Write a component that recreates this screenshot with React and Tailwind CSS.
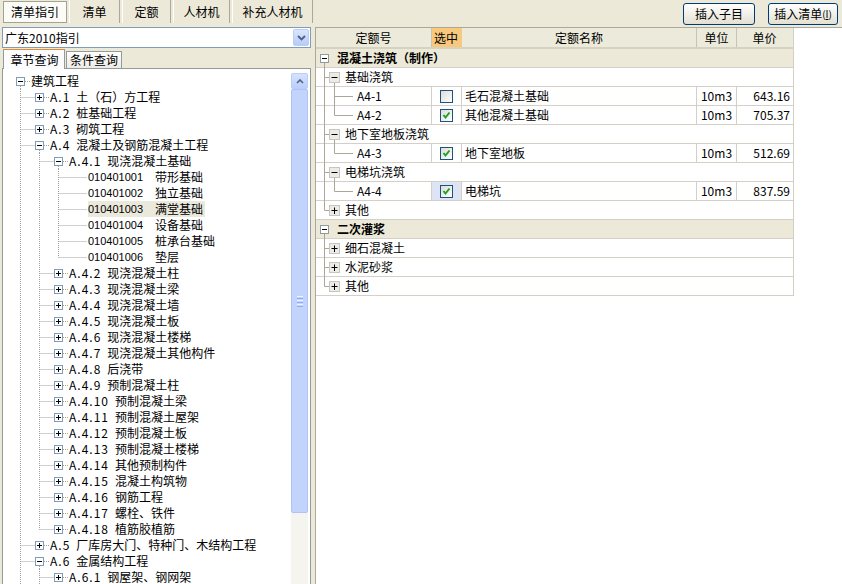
import React from 'react';

const tree = [
  [0, 'm', '', '建筑工程'],
  [1, 'p', 'A.1', '土（石）方工程'],
  [1, 'p', 'A.2', '桩基础工程'],
  [1, 'p', 'A.3', '砌筑工程'],
  [1, 'm', 'A.4', '混凝土及钢筋混凝土工程'],
  [2, 'm', 'A.4.1', '现浇混凝土基础'],
  [3, 'l', '010401001', '带形基础'],
  [3, 'l', '010401002', '独立基础'],
  [3, 'l', '010401003', '满堂基础', true],
  [3, 'l', '010401004', '设备基础'],
  [3, 'l', '010401005', '桩承台基础'],
  [3, 'l', '010401006', '垫层'],
  [2, 'p', 'A.4.2', '现浇混凝土柱'],
  [2, 'p', 'A.4.3', '现浇混凝土梁'],
  [2, 'p', 'A.4.4', '现浇混凝土墙'],
  [2, 'p', 'A.4.5', '现浇混凝土板'],
  [2, 'p', 'A.4.6', '现浇混凝土楼梯'],
  [2, 'p', 'A.4.7', '现浇混凝土其他构件'],
  [2, 'p', 'A.4.8', '后浇带'],
  [2, 'p', 'A.4.9', '预制混凝土柱'],
  [2, 'p', 'A.4.10', '预制混凝土梁'],
  [2, 'p', 'A.4.11', '预制混凝土屋架'],
  [2, 'p', 'A.4.12', '预制混凝土板'],
  [2, 'p', 'A.4.13', '预制混凝土楼梯'],
  [2, 'p', 'A.4.14', '其他预制构件'],
  [2, 'p', 'A.4.15', '混凝土构筑物'],
  [2, 'p', 'A.4.16', '钢筋工程'],
  [2, 'p', 'A.4.17', '螺栓、铁件'],
  [2, 'p', 'A.4.18', '植筋胶植筋'],
  [1, 'p', 'A.5', '厂库房大门、特种门、木结构工程'],
  [1, 'm', 'A.6', '金属结构工程'],
  [2, 'p', 'A.6.1', '钢屋架、钢网架'],
];

// does a vertical guide at depth a continue below row i?
// the list goes on past the visible part, so the two outer guides keep running
const cont = (i, a) => {
  for (let j = i + 1; j < tree.length; j++) {
    const l = tree[j][0];
    if (l <= a) return false;
    if (l === a + 1) return true;
  }
  return a <= 1;
};

const dot = { stroke: '#a0a0a0', strokeDasharray: '1 1' };

function TreeRow({ i }) {
  const [lv, kind, code, name, hl] = tree[i];
  const bx = 13 + 19 * lv;
  const c = (a) => 13 + 19 * a + 4.5;
  const open = tree[i + 1] && tree[i + 1][0] === lv + 1;
  const lines = [];
  for (let a = 0; a < lv; a++) {
    const go = cont(i, a);
    if (a === lv - 1) lines.push(<line key={'v' + a} x1={c(a)} y1={0} x2={c(a)} y2={go ? 16 : 8.5} {...dot} />);
    else if (go) lines.push(<line key={'v' + a} x1={c(a)} y1={0} x2={c(a)} y2={16} {...dot} />);
  }
  return (
    <div className="flex h-4 items-center whitespace-nowrap">
      <svg width={bx + 15} height={16} className="shrink-0">
        {lines}
        {lv > 0 && <line x1={c(lv - 1)} y1={8.5} x2={kind === 'l' ? bx + 14 : bx} y2={8.5} {...dot} />}
        {kind !== 'l' && (
          <>
            <rect x={bx + 0.5} y={4.5} width={8} height={8} fill="#fff" stroke="#7f9db9" />
            <line x1={bx + 2} y1={8.5} x2={bx + 7} y2={8.5} stroke="#000" />
            {kind === 'p' && <line x1={bx + 4.5} y1={6} x2={bx + 4.5} y2={11} stroke="#000" />}
            <line x1={bx + 9} y1={8.5} x2={bx + 14} y2={8.5} {...dot} />
            {open && <line x1={c(lv)} y1={13} x2={c(lv)} y2={16} {...dot} />}
          </>
        )}
      </svg>
      {kind === 'l' ? (
        <span className={'flex h-4 items-center pr-[2px] ' + (hl ? 'bg-[#ebe9dc]' : '')}>
          <span className="inline-block w-[67px] font-['Liberation_Sans',sans-serif] text-[11px]">{code}</span>
          <span>{name}</span>
        </span>
      ) : (
        <span>
          {code && <span className="mr-[6px] tracking-[1px]">{code}</span>}
          {name}
        </span>
      )}
    </div>
  );
}

const quota = [
  { t: 'g', name: '混凝土浇筑（制作）' },
  { t: 's', name: '基础浇筑', open: true, last: false },
  { t: 'i', code: 'A4-1', on: false, name: '毛石混凝土基础', unit: '10m3', price: '643.16', more: true, subMore: true },
  { t: 'i', code: 'A4-2', on: true, name: '其他混凝土基础', unit: '10m3', price: '705.37', more: false, subMore: true },
  { t: 's', name: '地下室地板浇筑', open: true, last: false },
  { t: 'i', code: 'A4-3', on: true, name: '地下室地板', unit: '10m3', price: '512.69', more: false, subMore: true },
  { t: 's', name: '电梯坑浇筑', open: true, last: false },
  { t: 'i', code: 'A4-4', on: true, name: '电梯坑', unit: '10m3', price: '837.59', more: false, subMore: true, sel: true },
  { t: 's', name: '其他', open: false, last: true },
  { t: 'g', name: '二次灌浆' },
  { t: 's', name: '细石混凝土', open: false, last: false },
  { t: 's', name: '水泥砂浆', open: false, last: false },
  { t: 's', name: '其他', open: false, last: true },
];

const ln = { stroke: '#aca899' };

function CheckBox({ on }) {
  return (
    <span className="flex h-[13px] w-[13px] items-center justify-center border border-[#1c5180] bg-linear-to-br from-[#dcdcd7] to-white">
      {on && (
        <svg width="9" height="9">
          <polyline points="1.5,4 3.5,6.5 7.5,1.5" fill="none" stroke="#21a121" strokeWidth="2" />
        </svg>
      )}
    </span>
  );
}

function QuotaRow({ r }) {
  if (r.t === 'g') {
    return (
      <div className="flex h-[19px] items-center border-b border-[#d4d0c8] bg-[#ece9d8] font-bold">
        <svg width={21} height={19} className="shrink-0">
          <rect x={4.5} y={5.5} width={8} height={8} fill="#fff" stroke="#919b9c" />
          <line x1={6} y1={9.5} x2={11} y2={9.5} stroke="#000" />
          <line x1={8.5} y1={14} x2={8.5} y2={19} {...ln} />
        </svg>
        <span>{r.name}</span>
      </div>
    );
  }
  if (r.t === 's') {
    return (
      <div className="flex h-[19px] items-center border-b border-[#d4d0c8]">
        <svg width={29} height={19} className="shrink-0">
          <line x1={8.5} y1={0} x2={8.5} y2={r.last ? 9.5 : 19} {...ln} />
          <line x1={8.5} y1={9.5} x2={13} y2={9.5} {...ln} />
          <rect x={13.5} y={4.5} width={10} height={10} fill="#ecebe6" stroke="#c6c5c0" />
          <line x1={15.5} y1={9.5} x2={21.5} y2={9.5} stroke="#000" />
          {!r.open && <line x1={18.5} y1={6.5} x2={18.5} y2={13} stroke="#000" />}
          {r.open && <line x1={18.5} y1={15} x2={18.5} y2={19} {...ln} />}
        </svg>
        <span>{r.name}</span>
      </div>
    );
  }
  return (
    <div className="flex h-[19px] border-b border-[#d4d0c8]">
      <div className="flex w-[116px] items-center border-r border-[#d4d0c8]">
        <svg width={41} height={19} className="shrink-0">
          {r.subMore && <line x1={8.5} y1={0} x2={8.5} y2={19} {...ln} />}
          <line x1={18.5} y1={0} x2={18.5} y2={r.more ? 19 : 9.5} {...ln} />
          <line x1={18.5} y1={9.5} x2={37} y2={9.5} {...ln} />
        </svg>
        <span>{r.code}</span>
      </div>
      <div className={'flex w-[30px] items-center justify-center border-r border-[#d4d0c8] ' + (r.sel ? 'bg-[#dde5f5]' : '')}>
        <CheckBox on={r.on} />
      </div>
      <div className="flex w-[235px] items-center border-r border-[#d4d0c8] pl-[3px]">{r.name}</div>
      <div className="flex w-[40px] items-center justify-center border-r border-[#d4d0c8]">{r.unit}</div>
      <div className="flex w-[55px] items-center justify-end pr-[2px]">{r.price}</div>
    </div>
  );
}

function TopTab({ label, w, active }) {
  if (active) {
    return (
      <div className={`mt-[1px] flex h-[22px] ${w} items-center justify-center border border-[#a5a290] bg-[#fbfbf8]`}>
        {label}
      </div>
    );
  }
  return (
    <div className={`flex h-[23px] ${w} items-center justify-center border-l border-r border-l-white border-r-[#aca899]`}>
      {label}
    </div>
  );
}

export default function App() {
  return (
    <div className="flex h-[584px] w-[842px] flex-col overflow-hidden bg-[#ece9d8] font-['Noto_Sans_CJK_SC',sans-serif] text-[12px] leading-none text-black">
      <div className="flex h-[27px] shrink-0 items-start">
        <div className="ml-[3px] flex gap-[2px]">
          <TopTab label="清单指引" w="w-[64px]" active />
          <TopTab label="清单" w="w-[51px]" />
          <TopTab label="定额" w="w-[49px]" />
          <TopTab label="人材机" w="w-[57px]" />
          <TopTab label="补充人材机" w="w-[81px]" />
        </div>
        <div className="ml-auto mr-[4px] mt-[3px] flex gap-[13px]">
          <button className="flex h-[22px] w-[72px] items-center justify-center rounded-[3px] border border-[#003c74] bg-linear-to-b from-white to-[#e3e0d2]">
            插入子目
          </button>
          <button className="flex h-[22px] w-[70px] items-center justify-center rounded-[3px] border border-[#003c74] bg-linear-to-b from-white to-[#e3e0d2]">
            插入清单<span className="text-[10px]">(<u>I</u>)</span>
          </button>
        </div>
      </div>

      <div className="flex min-h-0 flex-1">
        <div className="flex w-[315px] shrink-0 flex-col pl-[2px] pr-[4px]">
          <div className="flex h-[21px] items-center border border-[#7f9db9] bg-white pl-[2px]">
            <span className="flex-1">广东2010指引</span>
            <span className="mr-[1px] flex h-[17px] w-[16px] items-center justify-center rounded-[2px] border border-[#b9cdf8] bg-linear-to-b from-[#dbe6fd] to-[#b7cbf8]">
              <svg width="9" height="6">
                <polyline points="1,1 4.5,4.5 8,1" fill="none" stroke="#4d6185" strokeWidth="1.8" />
              </svg>
            </span>
          </div>
          <div className="flex h-[20px] items-end pl-[1px]">
            <div className="relative z-10 -mb-px flex h-[20px] w-[62px] items-center justify-center border border-b-0 border-[#919b9c] border-t-[#e68b2c] bg-[#fcfcfe] pl-[1px]">
              章节查询
            </div>
            <div className="ml-[1px] flex h-[17px] w-[56px] items-center justify-center border border-b-0 border-[#919b9c] bg-linear-to-b from-white to-[#ecebe6]">
              条件查询
            </div>
          </div>
          <div className="flex min-h-0 flex-1 border border-b-0 border-[#919b9c] bg-white pr-[2px] pt-[4px]">
            <div className="min-w-0 flex-1 overflow-hidden">
              {tree.map((_, i) => (
                <TreeRow key={i} i={i} />
              ))}
            </div>
            <div className="flex w-[17px] shrink-0 flex-col bg-[#f5f4ef]">
              <div className="flex h-[16px] items-center justify-center rounded-[2px] border border-[#b9cdf8] bg-linear-to-b from-[#d6e2fd] to-[#bccefa]">
                <svg width="8" height="5">
                  <polyline points="1,4 4,1 7,4" fill="none" stroke="#4d6185" strokeWidth="1.6" />
                </svg>
              </div>
              <div className="flex h-[424px] shrink-0 flex-col items-center justify-center gap-[1px] rounded-[2px] border border-[#aec4f6] bg-[#c3d4fc]">
                <span className="h-px w-[6px] bg-[#eef4fe]" />
                <span className="h-px w-[6px] bg-[#8cb0f8]" />
                <span className="h-px w-[6px] bg-[#eef4fe]" />
                <span className="h-px w-[6px] bg-[#8cb0f8]" />
                <span className="h-px w-[6px] bg-[#eef4fe]" />
                <span className="h-px w-[6px] bg-[#8cb0f8]" />
              </div>
            </div>
          </div>
        </div>

        <div className="min-w-0 flex-1 border-l border-t border-[#aca899] bg-white">
          <div className="w-[478px] border-r border-[#d4d0c8]">
            <div className="flex h-[21px] border-b-2 border-[#d6d2c2] bg-[#ebeadb]">
              <div className="flex w-[116px] items-center justify-center border-r border-[#c7c5b2]">定额号</div>
              <div className="flex w-[30px] items-center bg-[#f8c97c] pl-[2px]">选中</div>
              <div className="flex w-[235px] items-center justify-center border-r border-[#c7c5b2]">定额名称</div>
              <div className="flex w-[40px] items-center justify-center border-r border-[#c7c5b2]">单位</div>
              <div className="flex w-[55px] items-center justify-center">单价</div>
            </div>
            {quota.map((r, i) => (
              <QuotaRow key={i} r={r} />
            ))}
          </div>
        </div>
      </div>
    </div>
  );
}
